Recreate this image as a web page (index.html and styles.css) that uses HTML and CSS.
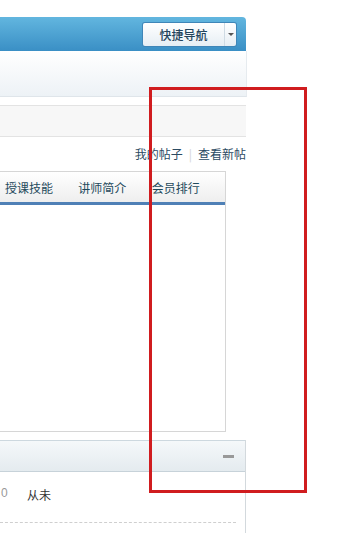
FILE: index.html
```html
<!DOCTYPE html>
<html lang="zh-CN">
<head>
    <meta charset="UTF-8">
    <meta name="viewport" content="width=device-width, initial-scale=1.0">
    <title>论坛</title>
    <link rel="stylesheet" href="styles.css">
</head>
<body>
    <div class="page">
        <div class="hdr">
            <div class="qnav">
                <span class="qnav-label">快捷导航</span>
                <span class="qnav-arrow"></span>
            </div>
        </div>
        <div class="sub"></div>
        <div class="bar"></div>
        <div class="links">
            <a href="#">我的帖子</a><span class="pipe">|</span><a href="#">查看新帖</a>
        </div>
        <div class="tabbox">
            <div class="tabs">
                <span class="tab">授课技能</span>
                <span class="tab">讲师简介</span>
                <span class="tab">会员排行</span>
            </div>
            <div class="tab-body"></div>
        </div>
        <div class="panel">
            <div class="panel-hd">
                <span class="collapse"></span>
            </div>
            <div class="panel-bd">
                <div class="row">
                    <span class="num">0</span>
                    <span class="last">从未</span>
                </div>
            </div>
        </div>
    </div>
    <div class="mark"></div>
</body>
</html>
```

FILE: styles.css
```css
body {
    margin: 0;
    background-color: #fff;
    font-family: "Noto Sans CJK SC", "Liberation Sans", sans-serif;
    font-size: 12px;
    color: #333;
    overflow: hidden;
}

.page {
    width: 247px;
    padding-top: 17px;
}

.hdr {
    height: 33px;
    width: 246px;
    background: linear-gradient(#62b6df, #3a8fc5);
    border-radius: 0 4px 0 0;
    display: flex;
    justify-content: flex-end;
    align-items: center;
    padding-top: 1px;
}

.qnav {
    display: flex;
    height: 23px;
    margin-right: 10px;
    border-radius: 2px;
    background: linear-gradient(#ffffff, #e6eef4);
    box-shadow: 0 0 0 1px #3f86b8;
}

.qnav-label {
    width: 81px;
    line-height: 23px;
    text-align: center;
    color: #23445c;
    font-size: 12px;
    font-weight: 500;
}

.qnav-arrow {
    width: 11px;
    border-left: 1px solid #cfdbe4;
    position: relative;
}

.qnav-arrow::after {
    content: "";
    position: absolute;
    left: 3px;
    top: 10px;
    border-left: 3px solid transparent;
    border-right: 3px solid transparent;
    border-top: 3px solid #555;
}

.sub {
    height: 45px;
    background: linear-gradient(#ffffff, #edf2f6);
    border-right: 1px solid #e6ebef;
    border-bottom: 1px solid #dfe5ea;
}

.bar {
    margin-top: 8px;
    width: 246px;
    height: 30px;
    background-color: #f7f7f7;
    border-top: 1px solid #e3e3e3;
    border-bottom: 1px solid #e3e3e3;
}

.links {
    width: 246px;
    height: 33px;
    display: flex;
    justify-content: flex-end;
    align-items: center;
    font-size: 12px;
    margin-bottom: 1px;
}

.links a {
    color: #2b4a62;
    text-decoration: none;
}

.pipe {
    color: #d4d4d4;
    margin: 0 6px;
}

.tabbox {
    width: 225px;
    height: 259px;
    border-right: 1px solid #d6d6d6;
    border-top: 1px solid #d6d6d6;
    border-bottom: 1px solid #d6d6d6;
}

.tabs {
    height: 30px;
    display: flex;
    padding-left: 5px;
    align-items: center;
    background: linear-gradient(#ffffff, #eeeeee);
    border-bottom: 3px solid #4f80b6;
}

.tab {
    width: 75px;
    color: #1f4a5c;
    font-size: 12px;
}

.panel {
    margin-top: 8px;
    width: 245px;
    border-right: 1px solid #d3d9dd;
    height: 93px;
}

.panel-hd {
    height: 30px;
    background: linear-gradient(#f5f8fa, #e4ebef);
    border-top: 1px solid #cdd8df;
    border-bottom: 1px solid #c7d2d9;
    display: flex;
    justify-content: flex-end;
    align-items: center;
}

.collapse {
    width: 11px;
    height: 3px;
    background-color: #999;
    margin-right: 11px;
}

.panel-bd {
    padding: 0 10px 0 0;
}

.row {
    height: 36px;
    padding-top: 14px;
    display: flex;
    align-items: flex-start;
    border-bottom: 1px dashed #cfcfcf;
    width: 236px;
}

.num {
    width: 26px;
    padding-left: 1px;
    color: #999;
    font-family: "Liberation Sans", sans-serif;
}

.last {
    color: #333;
}

.mark {
    position: absolute;
    left: 149px;
    top: 87px;
    width: 158px;
    height: 406px;
    box-sizing: border-box;
    border: 3px solid #d01c1f;
}
```
